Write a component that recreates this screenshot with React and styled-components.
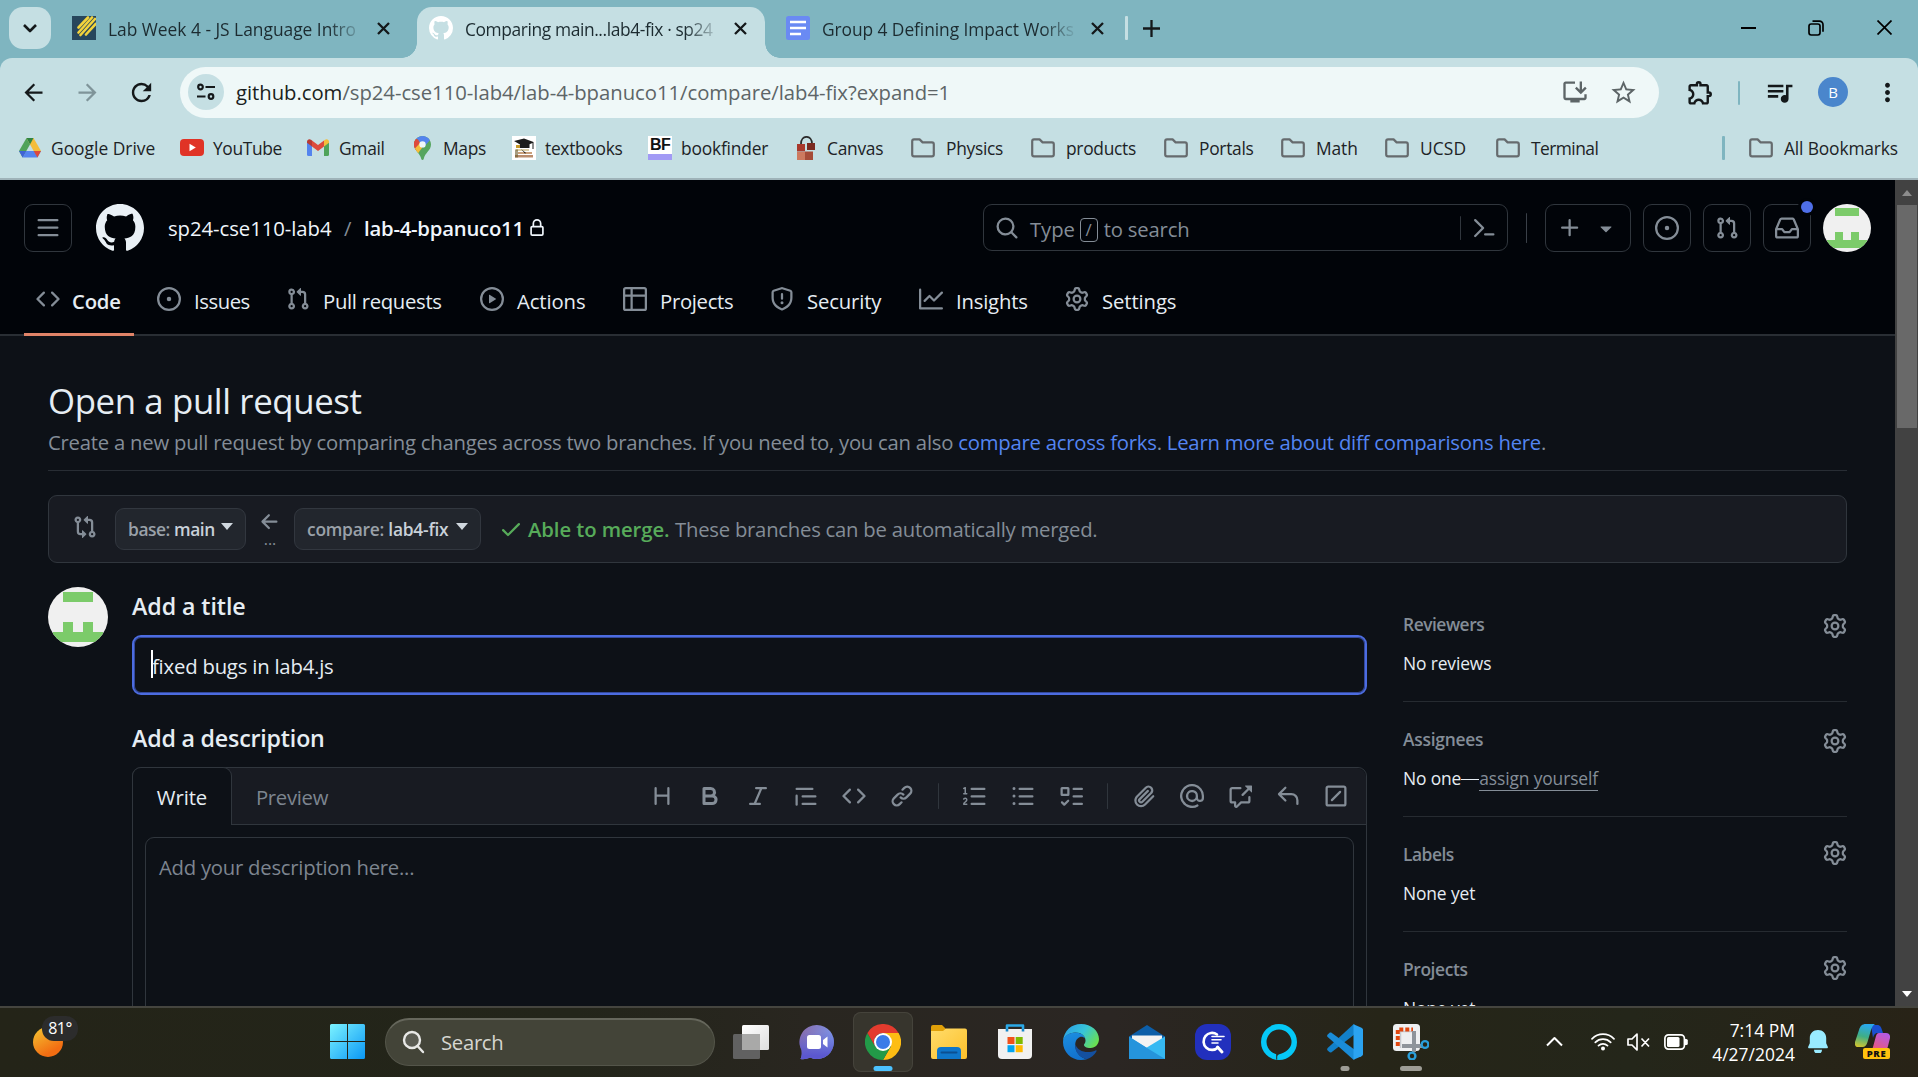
import React from "react";
import styled, { createGlobalStyle, css } from "styled-components";
import {
  MdArrowBack,
  MdArrowForward,
  MdRefresh,
  MdOutlineInstallDesktop,
  MdStarBorder,
  MdOutlineExtension,
  MdQueueMusic,
  MdMoreVert,
} from "react-icons/md";

const GlobalStyle = createGlobalStyle`
  * { box-sizing: border-box; }
  html, body { margin: 0; padding: 0; background: #0d1117; }
  body {
    font-family: "Open Sans", "Noto Sans", "Liberation Sans", sans-serif;
    overflow: hidden;
  }
  svg { display: block; flex: none; }
`;

/* ---------- Octicons (16px grid) ---------- */

const octicons = {
  code: "m11.28 3.22 4.25 4.25a.75.75 0 0 1 0 1.06l-4.25 4.25a.749.749 0 0 1-1.275-.326.749.749 0 0 1 .215-.734L13.94 8l-3.72-3.72a.749.749 0 0 1 .326-1.275.749.749 0 0 1 .734.215Zm-6.56 0a.751.751 0 0 1 1.042.018.751.751 0 0 1 .018 1.042L2.06 8l3.72 3.72a.749.749 0 0 1-.326 1.275.749.749 0 0 1-.734-.215L.47 8.53a.75.75 0 0 1 0-1.06Z",
  issue: "M8 9.5a1.5 1.5 0 1 0 0-3 1.5 1.5 0 0 0 0 3ZM8 0a8 8 0 1 1 0 16A8 8 0 0 1 8 0ZM1.5 8a6.5 6.5 0 1 0 13 0 6.5 6.5 0 0 0-13 0Z",
  pull: "M1.5 3.25a2.25 2.25 0 1 1 3 2.122v5.256a2.251 2.251 0 1 1-1.5 0V5.372A2.25 2.25 0 0 1 1.5 3.25Zm5.677-.177L9.573.677A.25.25 0 0 1 10 .854V2.5h1A2.5 2.5 0 0 1 13.5 5v5.628a2.251 2.251 0 1 1-1.5 0V5a1 1 0 0 0-1-1h-1v1.646a.25.25 0 0 1-.427.177L7.177 3.427a.25.25 0 0 1 0-.354ZM3.75 2.5a.75.75 0 1 0 0 1.5.75.75 0 0 0 0-1.5Zm0 9.5a.75.75 0 1 0 0 1.5.75.75 0 0 0 0-1.5Zm8.25.75a.75.75 0 1 0 1.5 0 .75.75 0 0 0-1.5 0Z",
  play: "M8 0a8 8 0 1 1 0 16A8 8 0 0 1 8 0ZM1.5 8a6.5 6.5 0 1 0 13 0 6.5 6.5 0 0 0-13 0Zm4.879-2.773 4.264 2.559a.25.25 0 0 1 0 .428l-4.264 2.559A.25.25 0 0 1 6 10.559V5.442a.25.25 0 0 1 .379-.215Z",
  table: "M0 1.75C0 .784.784 0 1.75 0h12.5C15.216 0 16 .784 16 1.75v12.5A1.75 1.75 0 0 1 14.25 16H1.75A1.75 1.75 0 0 1 0 14.25ZM6.5 6.5v8h7.75a.25.25 0 0 0 .25-.25V6.5Zm8-1.5V1.75a.25.25 0 0 0-.25-.25H6.5V5Zm-13 1.5v7.75c0 .138.112.25.25.25H5v-8ZM5 5V1.5H1.75a.25.25 0 0 0-.25.25V5Z",
  shield: "M7.467.133a1.748 1.748 0 0 1 1.066 0l5.25 1.68A1.75 1.75 0 0 1 15 3.48V7c0 1.566-.32 3.182-1.303 4.682-.983 1.498-2.585 2.813-5.032 3.855a1.697 1.697 0 0 1-1.33 0c-2.447-1.042-4.049-2.357-5.032-3.855C1.32 10.182 1 8.566 1 7V3.48a1.75 1.75 0 0 1 1.217-1.667Zm.61 1.429a.25.25 0 0 0-.153 0l-5.25 1.68a.25.25 0 0 0-.174.238V7c0 1.358.275 2.666 1.057 3.86.784 1.194 2.121 2.34 4.366 3.297a.196.196 0 0 0 .154 0c2.245-.956 3.582-2.104 4.366-3.298C13.225 9.666 13.5 8.36 13.5 7V3.48a.251.251 0 0 0-.174-.237l-5.25-1.68ZM8.75 4.75v3a.75.75 0 0 1-1.5 0v-3a.75.75 0 0 1 1.5 0ZM9 10.5a1 1 0 1 1-2 0 1 1 0 0 1 2 0Z",
  graph: "M1.5 1.75V13.5h13.75a.75.75 0 0 1 0 1.5H.75a.75.75 0 0 1-.75-.75V1.75a.75.75 0 0 1 1.5 0Zm14.28 2.53-5.25 5.25a.75.75 0 0 1-1.06 0L7 7.06 4.28 9.78a.751.751 0 0 1-1.042-.018.751.751 0 0 1-.018-1.042l3.25-3.25a.75.75 0 0 1 1.06 0L10 7.94l4.72-4.72a.751.751 0 0 1 1.042.018.751.751 0 0 1 .018 1.042Z",
  gear: "M8 0a8.2 8.2 0 0 1 .701.031C9.444.095 9.99.645 10.16 1.29l.288 1.107c.018.066.079.158.212.224.231.114.454.243.668.386.123.082.233.09.299.071l1.103-.303c.644-.176 1.392.021 1.82.63.27.385.506.792.704 1.218.315.675.111 1.422-.364 1.891l-.814.806c-.049.048-.098.147-.088.294.016.257.016.515 0 .772-.01.147.038.246.088.294l.814.806c.475.469.679 1.216.364 1.891a7.977 7.977 0 0 1-.704 1.217c-.428.61-1.176.807-1.82.63l-1.102-.302c-.067-.019-.177-.011-.3.071a5.909 5.909 0 0 1-.668.386c-.133.066-.194.158-.211.224l-.29 1.106c-.168.646-.715 1.196-1.458 1.26a8.006 8.006 0 0 1-1.402 0c-.743-.064-1.289-.614-1.458-1.26l-.289-1.106c-.018-.066-.079-.158-.212-.224a5.738 5.738 0 0 1-.668-.386c-.123-.082-.233-.09-.299-.071l-1.103.303c-.644.176-1.392-.021-1.82-.63a8.12 8.12 0 0 1-.704-1.218c-.315-.675-.111-1.422.363-1.891l.815-.806c.05-.048.098-.147.088-.294a6.214 6.214 0 0 1 0-.772c.01-.147-.038-.246-.088-.294l-.815-.806C.635 6.045.431 5.298.746 4.623a7.92 7.92 0 0 1 .704-1.217c.428-.61 1.176-.807 1.82-.63l1.102.302c.067.019.177.011.3-.071.214-.143.437-.272.668-.386.133-.066.194-.158.211-.224l.29-1.106C6.009.645 6.556.095 7.299.03 7.53.01 7.764 0 8 0Zm-.571 1.525c-.036.003-.108.036-.137.146l-.289 1.105c-.147.561-.549.967-.998 1.189-.173.086-.34.183-.5.29-.417.278-.97.423-1.529.27l-1.103-.303c-.109-.03-.175.016-.195.045-.22.312-.412.644-.573.99-.014.031-.021.11.059.19l.815.806c.411.406.562.957.53 1.456a4.709 4.709 0 0 0 0 .582c.032.499-.119 1.05-.53 1.456l-.815.806c-.081.08-.073.159-.059.19.162.346.353.677.573.989.02.03.085.076.195.046l1.102-.303c.56-.153 1.113-.008 1.53.27.161.107.328.204.501.29.447.222.85.629.997 1.189l.289 1.105c.029.109.101.143.137.146a6.6 6.6 0 0 0 1.142 0c.036-.003.108-.036.137-.146l.289-1.105c.147-.561.549-.967.998-1.189.173-.086.34-.183.5-.29.417-.278.97-.423 1.529-.27l1.103.303c.109.029.175-.016.195-.045.22-.313.411-.644.573-.99.014-.031.021-.11-.059-.19l-.815-.806c-.411-.406-.562-.957-.53-1.456a4.709 4.709 0 0 0 0-.582c-.032-.499.119-1.05.53-1.456l.815-.806c.081-.08.073-.159.059-.19a6.464 6.464 0 0 0-.573-.989c-.02-.03-.085-.076-.195-.046l-1.102.303c-.56.153-1.113.008-1.53-.27a4.44 4.44 0 0 0-.501-.29c-.447-.222-.85-.629-.997-1.189l-.289-1.105c-.029-.11-.101-.143-.137-.146a6.6 6.6 0 0 0-1.142 0ZM11 8a3 3 0 1 1-6 0 3 3 0 0 1 6 0ZM9.5 8a1.5 1.5 0 1 0-3.001.001A1.5 1.5 0 0 0 9.5 8Z",
  bars: "M1 2.75A.75.75 0 0 1 1.75 2h12.5a.75.75 0 0 1 0 1.5H1.75A.75.75 0 0 1 1 2.75Zm0 5A.75.75 0 0 1 1.75 7h12.5a.75.75 0 0 1 0 1.5H1.75A.75.75 0 0 1 1 7.75ZM1.75 12h12.5a.75.75 0 0 1 0 1.5H1.75a.75.75 0 0 1 0-1.5Z",
  github: "M8 0c4.42 0 8 3.58 8 8a8.013 8.013 0 0 1-5.45 7.59c-.4.08-.55-.17-.55-.38 0-.27.01-1.13.01-2.2 0-.75-.25-1.23-.54-1.48 1.78-.2 3.65-.88 3.65-3.95 0-.88-.31-1.59-.82-2.15.08-.2.36-1.02-.08-2.12 0 0-.67-.22-2.2.82-.64-.18-1.32-.27-2-.27-.68 0-1.36.09-2 .27-1.53-1.03-2.2-.82-2.2-.82-.44 1.1-.16 1.92-.08 2.12-.51.56-.82 1.28-.82 2.15 0 3.06 1.86 3.75 3.64 3.95-.23.2-.44.55-.51 1.07-.46.21-1.61.55-2.33-.66-.15-.24-.6-.83-1.23-.82-.67.01-.27.38.01.53.34.19.73.9.82 1.13.16.45.68 1.31 2.69.94 0 .67.01 1.3.01 1.49 0 .21-.15.45-.55.38A7.995 7.995 0 0 1 0 8c0-4.42 3.58-8 8-8Z",
  lock: "M4 4a4 4 0 0 1 8 0v2h.25c.966 0 1.75.784 1.75 1.75v5.5A1.75 1.75 0 0 1 12.25 15h-8.5A1.75 1.75 0 0 1 2 13.25v-5.5C2 6.784 2.784 6 3.75 6H4Zm8.25 3.5h-8.5a.25.25 0 0 0-.25.25v5.5c0 .138.112.25.25.25h8.5a.25.25 0 0 0 .25-.25v-5.5a.25.25 0 0 0-.25-.25ZM10.5 6V4a2.5 2.5 0 1 0-5 0v2Z",
  search: "M10.68 11.74a6 6 0 0 1-7.922-8.982 6 6 0 0 1 8.982 7.922l3.04 3.04a.749.749 0 0 1-.326 1.275.749.749 0 0 1-.734-.215ZM11.5 7a4.499 4.499 0 1 0-8.997 0A4.499 4.499 0 0 0 11.5 7Z",
  palette: "m6.354 8.04-4.773 4.773a.75.75 0 1 0 1.061 1.06L7.945 8.57a.75.75 0 0 0 0-1.06L2.642 2.206a.75.75 0 0 0-1.06 1.061L6.353 8.04ZM8.75 11.5a.75.75 0 0 0 0 1.5h5.5a.75.75 0 0 0 0-1.5h-5.5Z",
  plus: "M7.75 2a.75.75 0 0 1 .75.75V7h4.25a.75.75 0 0 1 0 1.5H8.5v4.25a.75.75 0 0 1-1.5 0V8.5H2.75a.75.75 0 0 1 0-1.5H7V2.75A.75.75 0 0 1 7.75 2Z",
  triangle: "m4.427 7.427 3.396 3.396a.25.25 0 0 0 .354 0l3.396-3.396A.25.25 0 0 0 11.396 7H4.604a.25.25 0 0 0-.177.427Z",
  inbox: "M2.8 2.06A1.75 1.75 0 0 1 4.41 1h7.18c.7 0 1.333.417 1.61 1.06l2.74 6.395c.04.093.06.194.06.295v4.5A1.75 1.75 0 0 1 14.25 15H1.75A1.75 1.75 0 0 1 0 13.25v-4.5c0-.101.02-.202.06-.295Zm1.61.44a.25.25 0 0 0-.23.152L1.887 8H4.75a.75.75 0 0 1 .6.3L6.625 10h2.75l1.275-1.7a.75.75 0 0 1 .6-.3h2.863L11.82 2.652a.25.25 0 0 0-.23-.152Zm10.09 7h-2.875l-1.275 1.7a.75.75 0 0 1-.6.3h-3.5a.75.75 0 0 1-.6-.3L4.375 9.5H1.5v3.75c0 .138.112.25.25.25h12.5a.25.25 0 0 0 .25-.25Z",
  compare: "M9.573.677A.25.25 0 0 1 10 .854V2.5h1A2.5 2.5 0 0 1 13.5 5v5.628a2.251 2.251 0 1 1-1.5 0V5a1 1 0 0 0-1-1h-1v1.646a.25.25 0 0 1-.427.177L7.177 3.427a.25.25 0 0 1 0-.354ZM6 12v-1.646a.25.25 0 0 1 .427-.177l2.396 2.396a.25.25 0 0 1 0 .354l-2.396 2.396A.25.25 0 0 1 6 15.146V13.5H5A2.5 2.5 0 0 1 2.5 11V5.372a2.25 2.25 0 1 1 1.5 0V11a1 1 0 0 0 1 1ZM4 3.25a.75.75 0 1 0-1.5 0 .75.75 0 0 0 1.5 0ZM12.75 12a.75.75 0 1 0 0 1.5.75.75 0 0 0 0-1.5Z",
  arrowLeft: "M7.78 12.53a.75.75 0 0 1-1.06 0L2.47 8.28a.75.75 0 0 1 0-1.06l4.25-4.25a.751.751 0 0 1 1.042.018.751.751 0 0 1 .018 1.042L4.81 7h7.44a.75.75 0 0 1 0 1.5H4.81l2.97 2.97a.75.75 0 0 1 0 1.06Z",
  check: "M13.78 4.22a.75.75 0 0 1 0 1.06l-7.25 7.25a.75.75 0 0 1-1.06 0L2.22 9.28a.751.751 0 0 1 .018-1.042.751.751 0 0 1 1.042-.018L6 10.94l6.72-6.72a.75.75 0 0 1 1.06 0Z",
  heading: "M3.75 2a.75.75 0 0 1 .75.75V7h7V2.75a.75.75 0 0 1 1.5 0v10.5a.75.75 0 0 1-1.5 0V8.5h-7v4.75a.75.75 0 0 1-1.5 0V2.75A.75.75 0 0 1 3.75 2Z",
  bold: "M4 2h4.5a3.501 3.501 0 0 1 2.852 5.53A3.499 3.499 0 0 1 9.5 14H4a1 1 0 0 1-1-1V3a1 1 0 0 1 1-1Zm1 7v3h4.5a1.5 1.5 0 0 0 0-3Zm3.5-2a1.5 1.5 0 0 0 0-3H5v3Z",
  italic: "M6 2.75A.75.75 0 0 1 6.75 2h6.5a.75.75 0 0 1 0 1.5h-2.505l-3.858 9H9.25a.75.75 0 0 1 0 1.5h-6.5a.75.75 0 0 1 0-1.5h2.505l3.858-9H6.75A.75.75 0 0 1 6 2.75Z",
  quote: "M1.75 2.5h10.5a.75.75 0 0 1 0 1.5H1.75a.75.75 0 0 1 0-1.5Zm4 5h8.5a.75.75 0 0 1 0 1.5h-8.5a.75.75 0 0 1 0-1.5Zm0 5h8.5a.75.75 0 0 1 0 1.5h-8.5a.75.75 0 0 1 0-1.5ZM2.5 7.75v6a.75.75 0 0 1-1.5 0v-6a.75.75 0 0 1 1.5 0Z",
  link: "m7.775 3.275 1.25-1.25a3.5 3.5 0 1 1 4.95 4.95l-2.5 2.5a3.5 3.5 0 0 1-4.95 0 .751.751 0 0 1 .018-1.042.751.751 0 0 1 1.042-.018 1.998 1.998 0 0 0 2.83 0l2.5-2.5a2.002 2.002 0 0 0-2.83-2.83l-1.25 1.25a.751.751 0 0 1-1.042-.018.751.751 0 0 1-.018-1.042Zm-4.69 9.64a1.998 1.998 0 0 0 2.83 0l1.25-1.25a.751.751 0 0 1 1.042.018.751.751 0 0 1 .018 1.042l-1.25 1.25a3.5 3.5 0 1 1-4.95-4.95l2.5-2.5a3.5 3.5 0 0 1 4.95 0 .751.751 0 0 1-.018 1.042.751.751 0 0 1-1.042.018 1.998 1.998 0 0 0-2.83 0l-2.5 2.5a1.998 1.998 0 0 0 0 2.83Z",
  ordered: "M5 3.25a.75.75 0 0 1 .75-.75h8.5a.75.75 0 0 1 0 1.5h-8.5A.75.75 0 0 1 5 3.25Zm0 5a.75.75 0 0 1 .75-.75h8.5a.75.75 0 0 1 0 1.5h-8.5A.75.75 0 0 1 5 8.25Zm0 5a.75.75 0 0 1 .75-.75h8.5a.75.75 0 0 1 0 1.5h-8.5a.75.75 0 0 1-.75-.75ZM.924 10.32a.5.5 0 0 1-.851-.525l.001-.001.001-.002.002-.004.007-.011c.097-.144.215-.273.348-.384.228-.19.588-.392 1.068-.392.468 0 .858.181 1.126.484.259.294.377.673.377 1.038 0 .987-.686 1.495-1.156 1.845l-.047.035c-.303.225-.522.4-.654.597h1.357a.5.5 0 0 1 0 1H.5a.5.5 0 0 1-.5-.5c0-1.005.692-1.52 1.167-1.875l.035-.025c.531-.396.8-.625.8-1.078a.57.57 0 0 0-.128-.376C1.806 10.068 1.695 10 1.5 10a.658.658 0 0 0-.429.163.835.835 0 0 0-.144.153ZM2.003 2.5V6h.503a.5.5 0 0 1 0 1H.5a.5.5 0 0 1 0-1h.503V3.308l-.28.14a.5.5 0 0 1-.446-.895l1.003-.5a.5.5 0 0 1 .723.447Z",
  unordered: "M5.75 2.5h8.5a.75.75 0 0 1 0 1.5h-8.5a.75.75 0 0 1 0-1.5Zm0 5h8.5a.75.75 0 0 1 0 1.5h-8.5a.75.75 0 0 1 0-1.5Zm0 5h8.5a.75.75 0 0 1 0 1.5h-8.5a.75.75 0 0 1 0-1.5ZM2 14a1 1 0 1 1 0-2 1 1 0 0 1 0 2Zm1-6a1 1 0 1 1-2 0 1 1 0 0 1 2 0ZM2 4a1 1 0 1 1 0-2 1 1 0 0 1 0 2Z",
  tasks: "M2 2h4a1 1 0 0 1 1 1v4a1 1 0 0 1-1 1H2a1 1 0 0 1-1-1V3a1 1 0 0 1 1-1Zm4.655 8.595a.75.75 0 0 1 0 1.06L4.03 14.28a.75.75 0 0 1-1.06 0l-1.5-1.5a.749.749 0 0 1 .326-1.275.749.749 0 0 1 .734.215l.97.97 2.095-2.095a.75.75 0 0 1 1.06 0ZM9.75 2.5h5.5a.75.75 0 0 1 0 1.5h-5.5a.75.75 0 0 1 0-1.5Zm0 5h5.5a.75.75 0 0 1 0 1.5h-5.5a.75.75 0 0 1 0-1.5Zm0 5h5.5a.75.75 0 0 1 0 1.5h-5.5a.75.75 0 0 1 0-1.5Zm-7.25-9v3h3v-3Z",
  clip: "M12.212 3.02a1.753 1.753 0 0 0-2.478.003l-5.83 5.83a3.007 3.007 0 0 0-.88 2.127c0 .795.315 1.551.88 2.116.567.567 1.333.89 2.126.89.79 0 1.548-.321 2.116-.89l5.48-5.48a.75.75 0 0 1 1.061 1.06l-5.48 5.48a4.492 4.492 0 0 1-3.177 1.33c-1.2 0-2.345-.487-3.187-1.33a4.483 4.483 0 0 1-1.32-3.177c0-1.195.475-2.341 1.32-3.186l5.83-5.83a3.25 3.25 0 0 1 5.553 2.297c0 .863-.343 1.691-.953 2.301L7.439 12.39c-.375.377-.884.59-1.416.593a1.998 1.998 0 0 1-1.412-.593 1.992 1.992 0 0 1 0-2.828l5.48-5.48a.751.751 0 0 1 1.042.018.751.751 0 0 1 .018 1.042l-5.48 5.48a.492.492 0 0 0 0 .707.499.499 0 0 0 .352.154.51.51 0 0 0 .356-.154l5.833-5.827a1.755 1.755 0 0 0 0-2.481Z",
  mention: "M4.75 2.37a6.501 6.501 0 0 0 6.5 11.26.75.75 0 0 1 .75 1.298A7.999 7.999 0 0 1 .989 4.148 8 8 0 0 1 16 7.75v1.5a2.75 2.75 0 0 1-5.072 1.475 3.999 3.999 0 0 1-6.65-4.19A4 4 0 0 1 12 8v1.25a1.25 1.25 0 0 0 2.5 0V7.867a6.5 6.5 0 0 0-9.75-5.496ZM10.5 8a2.5 2.5 0 1 0-5 0 2.5 2.5 0 0 0 5 0Z",
  crossRef: "M2.75 3.5a.25.25 0 0 0-.25.25v7.5c0 .138.112.25.25.25h2a.75.75 0 0 1 .75.75v2.19l2.72-2.72a.749.749 0 0 1 .53-.22h4.5a.25.25 0 0 0 .25-.25v-2.5a.75.75 0 0 1 1.5 0v2.5A1.75 1.75 0 0 1 13.25 13H9.06l-2.573 2.573A1.458 1.458 0 0 1 4 14.543V13H2.75A1.75 1.75 0 0 1 1 11.25v-7.5C1 2.784 1.784 2 2.75 2h5.5a.75.75 0 0 1 0 1.5ZM16 1.25v4.146a.25.25 0 0 1-.427.177L14.03 4.03l-3.75 3.75a.749.749 0 0 1-1.275-.326.749.749 0 0 1 .215-.734l3.75-3.75-1.543-1.543A.25.25 0 0 1 11.604 1h4.146a.25.25 0 0 1 .25.25Z",
  reply: "M6.78 1.97a.75.75 0 0 1 0 1.06L3.81 6h6.44A4.75 4.75 0 0 1 15 10.75v2.5a.75.75 0 0 1-1.5 0v-2.5a3.25 3.25 0 0 0-3.25-3.25H3.81l2.97 2.97a.749.749 0 0 1-.326 1.275.749.749 0 0 1-.734-.215L1.47 7.28a.75.75 0 0 1 0-1.06l4.25-4.25a.75.75 0 0 1 1.06 0Z",
  slash: "M13.25 1c.966 0 1.75.784 1.75 1.75v10.5A1.75 1.75 0 0 1 13.25 15H2.75A1.75 1.75 0 0 1 1 13.25V2.75C1 1.784 1.784 1 2.75 1ZM2.75 2.5a.25.25 0 0 0-.25.25v10.5c0 .138.112.25.25.25h10.5a.25.25 0 0 0 .25-.25V2.75a.25.25 0 0 0-.25-.25Zm8.53 3.28-5.5 5.5a.75.75 0 0 1-1.06-1.06l5.5-5.5a.75.75 0 0 1 1.06 1.06Z",
};

const Octicon = ({ name, size = 24, color = "currentColor" }) => (
  <svg width={size} height={size} viewBox="0 0 16 16" fill={color} fillRule="evenodd">
    <path d={octicons[name]} />
  </svg>
);

/* ---------- Text ---------- */

const Text = styled.span`
  display: block;
  white-space: nowrap;
  font-size: ${(p) => p.$size || 20.3}px;
  font-weight: ${(p) => p.$weight || 400};
  letter-spacing: ${(p) => p.$track || 0}px;
  color: ${(p) => p.$color || "inherit"};
  ${(p) => p.$width && css`width: ${p.$width}px;`}
`;

/* ---------- Desktop shell ---------- */

const Screen = styled.div`
  width: 1918px;
  height: 1077px;
  display: grid;
  grid-template-rows: 58px 122px 826px 71px;
  overflow: hidden;
  background: #7fb5c0;
`;

const TabStrip = styled.div`
  display: flex;
  padding: 7px 0 0 9px;
  background: #7fb5c0;
  color: #1c2b30;
`;

const TabSearch = styled.button`
  width: 42px;
  height: 42px;
  border: 0;
  padding: 0;
  border-radius: 14px;
  background: #c5dfe3;
  display: grid;
  place-items: center;
  color: #14181a;
`;

const Tabs = styled.div`
  display: flex;
  gap: 9px;
  margin-left: 9px;
`;

const flare = css`
  content: "";
  position: absolute;
  bottom: 0;
  width: 15px;
  height: 15px;
`;

const Tab = styled.div`
  position: relative;
  width: 348px;
  height: 51px;
  display: flex;
  padding: 9px 0 0 12px;
  ${(p) =>
    p.$active &&
    css`
      background: #c5dfe3;
      border-radius: 15px 15px 0 0;
      &::before {
        ${flare}
        left: -15px;
        background: radial-gradient(circle at 0 0, transparent 14.5px, #c5dfe3 15px);
      }
      &::after {
        ${flare}
        right: -15px;
        background: radial-gradient(circle at 100% 0, transparent 14.5px, #c5dfe3 15px);
      }
    `}
`;

const TabTitle = styled.div`
  width: 255px;
  height: 26px;
  line-height: 26px;
  margin: 0 14px 0 12px;
  white-space: nowrap;
  font-size: 17.4px;
  letter-spacing: ${(p) => p.$track}px;
  mask-image: linear-gradient(90deg, #000 220px, transparent 256px);
`;

const TabClose = styled.div`
  height: 24px;
  display: grid;
  place-items: center;
  color: #14181a;
`;

const NewTab = styled.div`
  display: flex;
  align-items: center;
  height: 42px;
  margin-left: 3px;
  gap: 15px;
  color: #14181a;
`;

const Divider = styled.span`
  flex: none;
  width: ${(p) => p.$w || 3}px;
  height: ${(p) => p.$h || 24}px;
  border-radius: 1px;
  background: ${(p) => p.$color};
  margin: ${(p) => p.$margin || 0};
`;

const WindowControls = styled.div`
  display: flex;
  margin: -7px 0 0 auto;
  height: 55px;
  color: #000;
`;

const WindowButton = styled.div`
  width: 68px;
  display: grid;
  place-items: center;
`;

const BrowserChrome = styled.div`
  display: grid;
  grid-template-rows: 69px 1fr;
  background: #c5dfe3;
  border-radius: 12px 12px 0 0;
  border-bottom: 2px solid #9fb3b9;
`;

const Toolbar = styled.div`
  display: flex;
  align-items: center;
  padding-left: 6px;
  color: #1d2326;
`;

const ToolButton = styled.div`
  width: 54px;
  height: 54px;
  flex: none;
  display: grid;
  place-items: center;
  padding-bottom: 1px;
  color: ${(p) => (p.$dim ? "#7f9499" : "#14181a")};
  margin-left: ${(p) => p.$ml || 0}px;
`;

const Omnibox = styled.div`
  width: 1479px;
  height: 51px;
  margin-left: 12px;
  border-radius: 26px;
  background: #eff8f8;
  display: flex;
  align-items: center;
  padding: 0 21px 1px 8px;
  color: #5d6567;
`;

const SiteInfo = styled.div`
  width: 36px;
  height: 36px;
  border-radius: 50%;
  background: #c5dfe3;
  display: grid;
  place-items: center;
  margin-right: 12px;
  color: #14181a;
`;

const Url = styled.div`
  flex: 1;
  font-size: 20.3px;
  letter-spacing: -0.03px;
  white-space: nowrap;
  b { font-weight: 400; color: #1a1f21; }
`;

const OmniActions = styled.div`
  display: flex;
  align-items: center;
  gap: 20px;
`;

const Profile = styled.div`
  width: 30px;
  height: 30px;
  border-radius: 50%;
  background: #4a86cc;
  color: #fff;
  font-size: 15px;
  display: grid;
  place-items: center;
`;

const BookmarksBar = styled.div`
  display: flex;
  align-items: center;
  padding: 0 0 10px 18px;
  color: #1d2326;
`;

const Bookmark = styled.div`
  flex: none;
  display: flex;
  align-items: center;
  gap: ${(p) => (p.$folder ? 11 : 9)}px;
  width: ${(p) => p.$w}px;
  font-size: 17.4px;
  letter-spacing: ${(p) => p.$track ?? -0.3}px;
  white-space: nowrap;
`;

const BookmarkIcon = styled.span`
  width: 24px;
  flex: none;
  display: grid;
  place-items: center;
`;

/* ---------- Page ---------- */

const Viewport = styled.div`
  display: grid;
  grid-template-columns: 1895px 23px;
  overflow: hidden;
`;

const Page = styled.div`
  background: #0d1117;
  color: #e6edf3;
  overflow: hidden;
`;

const Scrollbar = styled.div`
  background: #424242;
  display: flex;
  flex-direction: column;
  align-items: center;
  padding: 10px 0 9px;
`;

const ScrollThumb = styled.div`
  width: 20px;
  height: 223px;
  margin: 9px 0 auto;
  background: #696969;
`;

const ScrollArrow = styled.span`
  border: 5.5px solid transparent;
  ${(p) =>
    p.$up
      ? css`border-top: 0; border-bottom: 6px solid #8c8c8c;`
      : css`border-bottom: 0; border-top: 6px solid #fff;`}
`;

const Header = styled.header`
  height: 156px;
  background: #010409;
  border-bottom: 2px solid #292e34;
`;

const HeaderTop = styled.div`
  height: 84px;
  display: flex;
  align-items: center;
  padding: 12px 24px 0;
`;

const IconButton = styled.div`
  position: relative;
  width: ${(p) => p.$w || 48}px;
  height: 48px;
  flex: none;
  border: 1px solid #30363d;
  border-radius: 9px;
  display: flex;
  align-items: center;
  justify-content: center;
  gap: 12px;
  color: #848d97;
`;

const Logo = styled.div`
  margin: 0 24px;
  color: #e9f0f5;
`;

const Breadcrumb = styled.div`
  display: flex;
  align-items: center;
  color: #f0f6fc;
`;

const SearchBox = styled.div`
  width: 525px;
  height: 47px;
  margin: -1px 0 0 auto;
  border: 1px solid #30363d;
  border-radius: 9px;
  display: flex;
  align-items: center;
  padding: 0 11px;
  color: #848d97;
`;

const SearchHint = styled.div`
  display: flex;
  align-items: center;
  margin: 2px 0 0 11px;
`;

const Key = styled.span`
  width: 18px;
  height: 24px;
  margin: 2px 6px 0 5px;
  border: 1.5px solid #848d97;
  border-radius: 4px;
  display: grid;
  place-items: center;
  font-size: 17px;
  line-height: 1;
`;

const ActionRow = styled.div`
  display: flex;
  gap: 12px;
`;

const Unread = styled.span`
  position: absolute;
  top: -4px;
  right: -3px;
  width: 12px;
  height: 12px;
  border-radius: 50%;
  background: #4f6fe8;
  box-shadow: 0 0 0 3px #010409;
`;

const RepoNav = styled.nav`
  display: flex;
  padding-left: 24px;
  height: 72px;
`;

const NavItem = styled.div`
  height: 72px;
  width: ${(p) => p.$w}px;
  margin-right: 11px;
  padding: 5px 0 0 12px;
  display: flex;
  align-items: center;
  gap: ${(p) => (p.$active ? 12 : 13)}px;
  border-bottom: 3px solid ${(p) => (p.$active ? "#e08368" : "transparent")};
  svg { color: #848d97; margin-top: -4px; }
`;

const Main = styled.main`
  padding: 38px 48px 0;
`;

const PageHead = styled.div`
  height: 97px;
  border-bottom: 1px solid #282d34;
`;

const Title = styled.h1`
  margin: 0;
  height: 54px;
  line-height: 53px;
  font-size: 34.8px;
  font-weight: 400;
  letter-spacing: -0.38px;
`;

const Subtitle = styled.p`
  margin: 0;
  height: 28px;
  line-height: 28px;
  font-size: 20.3px;
  letter-spacing: -0.23px;
  color: #848d97;
  white-space: nowrap;
  a { color: #5485f2; }
`;

const RangeBar = styled.div`
  height: 68px;
  margin-top: 24px;
  border: 1px solid #30363d;
  border-radius: 9px;
  background: #181b22;
  display: flex;
  align-items: center;
  padding-left: 24px;
  color: #848d97;
`;

const CompareIcon = styled.div`
  margin: -5px 18px 0 0;
`;

const BranchButton = styled.div`
  height: 42px;
  width: ${(p) => p.$w}px;
  border: 1px solid #32373f;
  border-radius: 9px;
  background: #22262d;
  display: flex;
  align-items: center;
  padding: 0 12px 1px;
  gap: 6px;
  font-size: 17.4px;
  font-weight: 600;
  letter-spacing: ${(p) => p.$track}px;
  white-space: nowrap;
  color: #9aa1a9;
  b { font-weight: 600; color: #c9d1d9; }
`;

const Caret = styled.span`
  margin: -4px 0 0 auto;
  border: 6px solid transparent;
  border-top: 7px solid #d0d7de;
  border-bottom: 0;
`;

const Direction = styled.div`
  width: 48px;
  margin-top: -2px;
  display: flex;
  flex-direction: column;
  align-items: center;
  span { font-size: 16px; line-height: 16px; margin-top: -3px; }
`;

const MergeStatus = styled.div`
  display: flex;
  align-items: center;
  margin-left: 18px;
  color: #57ab5a;
  svg { margin-right: 5px; }
`;

const Compose = styled.div`
  display: grid;
  grid-template-columns: 60px 1235px 444px;
  column-gap: 24px;
  margin-top: 24px;
  > aside { margin-left: 12px; width: 444px; }
`;

const FieldLabel = styled.div`
  height: ${(p) => p.$h}px;
  line-height: ${(p) => p.$h}px;
  font-size: 23.2px;
  font-weight: 600;
  letter-spacing: ${(p) => p.$track}px;
`;

const TitleInput = styled.div`
  height: 60px;
  margin: 10px 0 27px;
  border: 2px solid #4c6ce0;
  box-shadow: inset 0 0 0 1px #34499a;
  border-radius: 9px;
  display: flex;
  align-items: center;
  padding: 1px 0 0 17px;
`;

const Cursor = styled.span`
  width: 2px;
  height: 28px;
  margin: -3px -1px 0 0;
  background: #fff;
`;

const Editor = styled.div`
  height: 420px;
  margin-top: 13px;
  border: 1px solid #30363d;
  border-radius: 9px;
`;

const EditorHead = styled.div`
  height: 57px;
  display: flex;
  background: #181b22;
  border-bottom: 1px solid #30363d;
  border-radius: 9px 9px 0 0;
`;

const EditorTab = styled.div`
  width: ${(p) => p.$w}px;
  height: 58px;
  margin: -1px 0 0 -1px;
  display: grid;
  place-items: center;
  padding-top: 1px;
  ${(p) =>
    p.$active
      ? css`
          background: #0d1117;
          border: 1px solid #30363d;
          border-bottom: 0;
          border-radius: 9px 9px 0 0;
        `
      : css`color: #7d8590;`}
`;

const MarkdownBar = styled.div`
  margin: 0 6px 1px auto;
  display: flex;
  align-items: center;
  color: #848d97;
`;

const MarkdownButton = styled.span`
  width: 48px;
  display: grid;
  place-items: center;
`;

const TextArea = styled.div`
  height: 340px;
  margin: 12px 12px 0;
  border: 1px solid #30363d;
  border-radius: 9px;
  padding: 15px 13px;
  color: #7d8590;
`;

const SideItem = styled.section`
  height: 115px;
  border-bottom: 1px solid #262b31;
  padding-top: 21px;
`;

const SideHead = styled.div`
  height: 32px;
  display: flex;
  align-items: center;
  justify-content: space-between;
  color: #848d97;
  svg { margin-top: ${(p) => p.$drop}px; }
`;

const SideBody = styled.div`
  height: 32px;
  margin-top: 7px;
  display: flex;
  align-items: center;
  font-size: 17.4px;
  letter-spacing: -0.12px;
  white-space: nowrap;
  a {
    color: #848d97;
    line-height: 23px;
    border-bottom: 1.5px solid #848d97;
    margin-top: 2px;
  }
`;

const Dash = styled.span`
  width: 18px;
  height: 1.5px;
  margin-top: 3px;
  background: #e6edf3;
`;

/* ---------- Taskbar ---------- */

const Taskbar = styled.footer`
  display: flex;
  align-items: center;
  padding-bottom: 2px;
  border-top: 2px solid #45453f;
  background: linear-gradient(90deg, #242418 0%, #23251a 30%, #292620 42%, #2b2623 58%, #262518 72%, #24261a 85%, #282317 100%);
  color: #fff;
`;

const Weather = styled.div`
  width: 330px;
  height: 67px;
  padding-left: 33px;
`;

const WeatherIcon = styled.div`
  position: relative;
  width: 30px;
  height: 30px;
  margin-top: 19px;
  border-radius: 50%;
  background: linear-gradient(150deg, #f4b52c 15%, #f26d12 75%);
`;

const Temperature = styled.span`
  position: absolute;
  left: 9px;
  top: -11px;
  width: 36px;
  height: 25px;
  border-radius: 12px;
  background: #2c2c2c;
  font-size: 16px;
  line-height: 24px;
  letter-spacing: -0.6px;
  text-align: center;
`;

const TaskSearch = styled.div`
  width: 330px;
  height: 48px;
  margin-left: 20px;
  border-radius: 24px;
  background: #434438;
  border: 1px solid #54554a;
  border-top: 2px solid #66675c;
  display: flex;
  align-items: center;
  padding: 0 0 1px 16px;
  gap: 15px;
  color: #d6d6d0;
`;

const TaskIcons = styled.div`
  display: flex;
  margin-left: 3px;
`;

const TaskIcon = styled.div`
  position: relative;
  width: 60px;
  height: 60px;
  margin: 0 3px;
  border-radius: 8px;
  display: grid;
  place-items: center;
  ${(p) =>
    p.$active &&
    css`
      background: #37352d;
      box-shadow: inset 0 0 0 1px #45433b;
    `}
  &::after {
    content: "";
    position: absolute;
    bottom: 1px;
    left: 50%;
    transform: translateX(-50%);
    width: ${(p) => p.$mark || 0}px;
    height: 5px;
    border-radius: 3px;
    background: ${(p) => (p.$active ? "#4cc2ff" : "#9d9c95")};
  }
`;

const Tray = styled.div`
  display: flex;
  align-items: center;
  margin-left: auto;
  height: 67px;
  padding-right: 28px;
`;

const TraySlot = styled.div`
  width: ${(p) => p.$w}px;
  display: grid;
  place-items: center;
`;

const Clock = styled.div`
  width: 101px;
  text-align: right;
  font-size: 17.4px;
  line-height: 24px;
  letter-spacing: 0.05px;
`;

const CopilotWrap = styled.div`
  position: relative;
  width: 35px;
  height: 35px;
  margin-left: 14px;
`;

const PreBadge = styled.span`
  position: absolute;
  left: 8px;
  bottom: 0;
  width: 27px;
  height: 11px;
  border-radius: 2px;
  background: #ffc20e;
  color: #111;
  font-size: 9.5px;
  font-weight: 800;
  line-height: 11px;
  letter-spacing: 0.6px;
  text-align: center;
`;

/* ---------- Drawings ---------- */

const Stroke = ({ size = 12, width = 2, d, w, h }) => (
  <svg width={w || size} height={h || size} viewBox={`0 0 ${w || size} ${h || size}`} fill="none" stroke="currentColor" strokeWidth={width} strokeLinejoin="round">
    <path d={d} />
  </svg>
);

const Identicon = ({ size }) => (
  <svg width={size} height={size} viewBox="0 0 60 60">
    <defs>
      <clipPath id={`round${size}`}>
        <circle cx="30" cy="30" r="30" />
      </clipPath>
    </defs>
    <g clipPath={`url(#round${size})`}>
      <rect width="60" height="60" fill="#f0f0f0" />
      <path fill="#7ccb6a" d="M15 5h30v10H15zM15 35h10v10h10V35h10v10h10v10H5V45h10z" />
    </g>
  </svg>
);

const GradescopeIcon = () => (
  <svg width="24" height="24" viewBox="0 0 24 24">
    <rect width="24" height="24" fill="#27465c" />
    <g stroke="#f3d33c" strokeWidth="2.6" strokeLinecap="round">
      <path d="M6.500 11.500L16 1.500M6.500 16.500L20 1.500M8.500 19L23 3M14 18.500L23.500 8" />
    </g>
  </svg>
);

const DocsIcon = () => (
  <svg width="24" height="24" viewBox="0 0 24 24">
    <rect width="24" height="24" rx="2.5" fill="#6a8af3" />
    <path d="M4 6h16M4 12h16M4 18h11" stroke="#fff" strokeWidth="2.6" />
  </svg>
);

const FolderIcon = () => (
  <svg width="24" height="20" viewBox="0 0 24 20" fill="none" stroke="#666b6e" strokeWidth="2.2" strokeLinejoin="round">
    <path d="M1.200 3.200a1.800 1.800 0 0 1 1.800-1.800h5.600l3 3h9.400a1.800 1.800 0 0 1 1.800 1.800v10.400a1.800 1.800 0 0 1-1.800 1.800H3a1.800 1.800 0 0 1-1.800-1.800z" />
  </svg>
);

const DriveIcon = () => (
  <svg width="22" height="20" viewBox="0 0 22 20">
    <path d="M7.500 0L0 13l3.600 6.500L11 6.500z" fill="#4fa35a" />
    <path d="M7.500 0h7L22 13h-7.300z" fill="#f4bd3a" />
    <path d="M7.500 0h7L11 6.500z" fill="#2f8443" />
    <path d="M3.600 19.500L7.300 13H22l-3.600 6.500z" fill="#5484ee" />
    <path d="M14.700 13H22l-3.600 6.500z" fill="#dd4a3c" />
    <path d="M0 13h7.300l-3.700 6.500z" fill="#3f63d6" />
  </svg>
);

const YouTubeIcon = () => (
  <svg width="24" height="17" viewBox="0 0 24 17">
    <rect width="24" height="17" rx="4" fill="#e03326" />
    <path d="M9.500 4.700v7.600l6.300-3.800z" fill="#fff" />
  </svg>
);

const GmailIcon = () => (
  <svg width="22" height="17" viewBox="0 0 22 17">
    <path d="M0 2.500V15.500A1.500 1.500 0 0 0 1.500 17H5V7z" fill="#5484ee" />
    <path d="M22 2.500V15.500A1.500 1.500 0 0 1 20.500 17H17V7z" fill="#4fa35a" />
    <path d="M5 1.500L11 6l6-4.500V7.500L11 12 5 7.500z" fill="#dd4a3c" />
    <path d="M0 2.500C0 .5 2.300-.6 4 .700L5 1.500v6L0 3.800z" fill="#b93a32" />
    <path d="M22 2.500C22 .5 19.700-.6 18 .700L17 1.500v6l5-3.700z" fill="#f4bd3a" />
  </svg>
);

const MapsIcon = () => (
  <svg width="17" height="24" viewBox="0 0 17 24">
    <defs>
      <clipPath id="pin">
        <path d="M8.500 0C13.200 0 17 3.800 17 8.500c0 6-6 8-7.300 14.500-.3 1.300-2.100 1.300-2.400 0C6.300 17.500 0 14.500 0 8.500 0 3.800 3.800 0 8.500 0z" />
      </clipPath>
    </defs>
    <g clipPath="url(#pin)">
      <rect width="17" height="24" fill="#56a55f" />
      <path d="M0 0h17L8.500 9z" fill="#5484ee" />
      <path d="M17 0v3L9 12 5 8z" fill="#5484ee" />
      <path d="M-1 1.500L8.500 9 1 16-1 14z" fill="#dd4a3c" />
      <path d="M10.500 8.500L3.500 18-1 14 6 6z" fill="#f4bd3a" />
      <path d="M-1 2l5 1.500L6 7-1 14.500z" fill="#dd4a3c" />
    </g>
    <circle cx="8.500" cy="8.400" r="3.200" fill="#eef7f8" />
  </svg>
);

const TextbooksIcon = () => (
  <svg width="24" height="24" viewBox="0 0 24 24">
    <rect width="24" height="24" fill="#fff" />
    <path d="M2 5l10-2.500L21.500 6v7h-1V7l-3 1.200V12H8V8.500z" fill="#1c1c1c" />
    <path d="M4 9h4v3H4z" fill="#c79a2b" />
    <path d="M4 13h13v2H4z" fill="#dccfa8" />
    <path d="M6 16h14v2H6z" fill="#c9a07b" />
    <path d="M3 19h18v2.500H3z" fill="#b98c6d" />
    <path d="M3 13.500h3v8H3z" fill="#6d5a2c" opacity=".6" />
    <path d="M9 13l5 4-1 .5z" fill="#111" />
  </svg>
);

const BookfinderTile = styled.span`
  width: 24px;
  height: 24px;
  display: block;
  background: #fff;
  border-bottom: 6px solid #a29af5;
  color: #111;
  font: 700 16px/18px "Liberation Sans", sans-serif;
  letter-spacing: -0.6px;
  text-align: center;
`;

const CanvasBagIcon = () => (
  <svg width="18" height="24" viewBox="0 0 18 24">
    <path d="M4 8c0-9.500 11-9.500 11 0" fill="none" stroke="#2b2b2b" strokeWidth="1.800" />
    <path d="M0 8h8v7.500H0z" fill="#a8392c" />
    <path d="M10 7h8v7h-8z" fill="#7a2a20" />
    <path d="M0 16h8v8H0z" fill="#cd7a5f" />
    <path d="M8 15.500h8V24H8z" fill="#a64c38" />
  </svg>
);

const WindowsIcon = () => (
  <svg width="35" height="35" viewBox="0 0 35 35">
    <defs>
      <linearGradient id="win" x1="0" y1="0" x2="1" y2="1">
        <stop offset="0" stopColor="#7cf3ff" />
        <stop offset="1" stopColor="#0a97f5" />
      </linearGradient>
    </defs>
    <path fill="url(#win)" d="M1.500 0H17v17H0V1.500A1.500 1.500 0 0 1 1.500 0zM18 0h15.500A1.500 1.500 0 0 1 35 1.500V17H18zM0 18h17v17H1.500A1.500 1.500 0 0 1 0 33.500zM18 18h17v15.500a1.500 1.500 0 0 1-1.500 1.500H18z" />
  </svg>
);

const TaskViewIcon = () => (
  <svg width="36" height="36" viewBox="0 0 36 36">
    <defs>
      <linearGradient id="tv" x1="0" y1="0" x2="1" y2="1">
        <stop offset="0" stopColor="#fff" />
        <stop offset="1" stopColor="#dedede" />
      </linearGradient>
    </defs>
    <rect x="9" y="1" width="27" height="25" rx="1.500" fill="url(#tv)" />
    <rect x="0" y="10" width="27" height="25" rx="1.500" fill="#616161" />
    <path d="M9 10h18v16H9z" fill="#a9a9a8" />
  </svg>
);

const ChatIcon = () => (
  <svg width="36" height="36" viewBox="0 0 36 36">
    <defs>
      <linearGradient id="chat" x1="0" y1="0" x2="1" y2="0.300">
        <stop offset="0" stopColor="#8a6aa8" />
        <stop offset="1" stopColor="#7b93e8" />
      </linearGradient>
      <linearGradient id="chat2" x1="0" y1="0" x2="0" y2="1">
        <stop offset="0.200" stopColor="#5b5fd0" stopOpacity="0" />
        <stop offset="0.900" stopColor="#5b57cf" />
      </linearGradient>
    </defs>
    <path d="M18 1a17 17 0 1 1-7 32.500C8 35 5 35.500 1.500 35 2.800 32 3 29.500 2.500 26A17 17 0 0 1 18 1z" fill="url(#chat)" />
    <path d="M18 1a17 17 0 1 1-7 32.500C8 35 5 35.500 1.500 35 2.800 32 3 29.500 2.500 26A17 17 0 0 1 18 1z" fill="url(#chat2)" />
    <rect x="8" y="11" width="14" height="14" rx="2.500" fill="#fff" />
    <path d="M24 16l4.500-3.500v11L24 20z" fill="#fff" />
  </svg>
);

const ChromeIcon = () => (
  <svg width="36" height="36" viewBox="0 0 36 36">
    <path d="M18 9h15.600A18 18 0 0 1 18 36l7.800-13.500z" fill="#fdbd13" />
    <path d="M10.200 22.500L2.400 9A18 18 0 0 0 18 36l7.800-13.500z" fill="#229a48" />
    <path d="M2.400 9A18 18 0 0 1 33.600 9H18a9 9 0 0 0-7.800 13.500z" fill="#e33b2e" />
    <circle cx="18" cy="18" r="9" fill="#fff" />
    <circle cx="18" cy="18" r="7" fill="#3a7be8" />
  </svg>
);

const ExplorerIcon = () => (
  <svg width="36" height="34" viewBox="0 0 36 34">
    <defs>
      <linearGradient id="fold" x1="0" y1="0" x2="1" y2="1">
        <stop offset="0" stopColor="#ffdc6b" />
        <stop offset="1" stopColor="#fdc02a" />
      </linearGradient>
    </defs>
    <path d="M0 2a2 2 0 0 1 2-2h9l4 4v5H0z" fill="#e0a009" />
    <path d="M0 6h12l3-2.500h19a2 2 0 0 1 2 2V32a2 2 0 0 1-2 2H2a2 2 0 0 1-2-2z" fill="url(#fold)" />
    <path d="M6 34V26a4 4 0 0 1 4-4h16a4 4 0 0 1 4 4v8z" fill="#0f76c9" />
    <path d="M10.500 27.500h15" stroke="#0b4f91" strokeWidth="2" strokeLinecap="round" />
  </svg>
);

const StoreIcon = () => (
  <svg width="36" height="36" viewBox="0 0 36 36">
    <path d="M10 8V1.500h16V8" fill="none" stroke="#2ba9e8" strokeWidth="2.600" strokeLinejoin="round" />
    <path d="M1 5h34v26a4 4 0 0 1-4 4H5a4 4 0 0 1-4-4z" fill="#f1f1f1" />
    <path d="M10 5v2.500M26 5v2.500" stroke="#1787c9" strokeWidth="2.600" />
    <path d="M10.500 13h7v7h-7z" fill="#f1511b" />
    <path d="M18.700 13h7v7h-7z" fill="#7fba00" />
    <path d="M10.500 21.200h7v7h-7z" fill="#00a4ef" />
    <path d="M18.700 21.200h7v7h-7z" fill="#ffb900" />
  </svg>
);

const EdgeIcon = () => (
  <svg width="36" height="36" viewBox="0 0 36 36">
    <defs>
      <linearGradient id="edgeTop" x1="0" y1="0.200" x2="1" y2="0.700">
        <stop offset="0" stopColor="#2b9fe6" />
        <stop offset="0.500" stopColor="#37c4d8" />
        <stop offset="1" stopColor="#6be04d" />
      </linearGradient>
      <linearGradient id="edgeLow" x1="0" y1="0" x2="0.300" y2="1">
        <stop offset="0" stopColor="#1c8fe0" />
        <stop offset="1" stopColor="#1272cf" />
      </linearGradient>
    </defs>
    <path d="M0 17C1 6.500 8.500 0 18 0c10.500 0 18 7.300 18 15 0 5-3.500 9-8.500 9-4.500 0-6.500-1.500-6.500-3 0-1.200 1.500-1.500 1.500-4.500C22.500 12 18 8.500 12.500 8.500 6 8.500 1.500 12.500 0 17z" fill="url(#edgeTop)" />
    <path d="M0 18C0 12 6 8.500 12.500 8.500c4.500 0 8.500 2.300 9.700 6-1.500-1.500-3.500-2-5.200-1.500-4 1.500-5.500 6-4.500 11 1.200 6 6 10 11.500 11.300-2 .6-4 .7-6 .7C8 36 0 28 0 18z" fill="url(#edgeLow)" />
    <path d="M12.300 20c-1 8 4.500 13.500 11.500 15.300 4-1.300 7.700-4.300 9.700-8 .4-.8-.3-1.300-1-.9C25 29.800 14.500 28 12.300 20z" fill="#1450a0" />
  </svg>
);

const MailIcon = () => (
  <svg width="36" height="34" viewBox="0 0 36 34">
    <path d="M0 11.500L18 0l18 11.500V20H0z" fill="#0c5ea8" />
    <path d="M3 10.500h30V24H3z" fill="#f3f3f3" />
    <path d="M0 11.500L18 23 0 34z" fill="#2a9fe3" />
    <path d="M36 11.500V34H1l16-11z" fill="#36b9f2" />
    <path d="M0 34V12l36 22z" fill="#2594dc" />
  </svg>
);

const FinderIcon = () => (
  <svg width="36" height="36" viewBox="0 0 36 36" fill="none" stroke="#fff" strokeLinecap="round">
    <rect width="36" height="36" rx="12" fill="#2230bd" stroke="none" />
    <path d="M22 10.500a8.500 8.500 0 1 0 1 13" strokeWidth="2.600" />
    <path d="M22.500 23l4.500 5" strokeWidth="3" />
    <path d="M17 12.500h12M17 15.800h9M17 19h6" strokeWidth="1.600" />
  </svg>
);

const AlexaIcon = () => (
  <svg width="36" height="36" viewBox="0 0 36 36">
    <path fillRule="evenodd" fill="#05c8f7" d="M18 0a18 18 0 1 1 0 36A18 18 0 0 1 18 0zM18 5.500A12.500 12.500 0 0 0 5.500 18c0 6 4.300 10.500 9.700 12.200v5.300h1V33c0-1.500.8-2.300 2-2.700C25 28.500 30.500 24 30.500 18A12.500 12.500 0 0 0 18 5.500z" />
  </svg>
);

const VSCodeIcon = () => (
  <svg width="36" height="36" viewBox="0 0 36 36">
    <path d="M26.500.200L28 1v9L4.500 28.200c-.7.500-1.500.400-2.200-.1L.700 26.600c-.8-.8-.8-1.900 0-2.700z" fill="#1280c9" />
    <path d="M26.500 35.800L28 35V26L4.500 8.800c-.7-.5-1.500-.4-2.200.1L.700 10.400c-.8.8-.8 1.900 0 2.700z" fill="#1a8cd8" />
    <path d="M26.500.200L34.500 3.800c1 .5 1.500 1.200 1.500 2.200v24c0 1-.5 1.700-1.500 2.200l-8 3.600z" fill="#2ba3f1" />
  </svg>
);

const SnipIcon = () => (
  <svg width="36" height="36" viewBox="0 0 36 36">
    <rect x="0" y="0" width="27" height="27" rx="3.500" fill="#eef0f2" />
    <path d="M7.500 24V7.500H20" fill="none" stroke="#c8cbd0" strokeWidth="1.500" />
    <path d="M4.800 22V5.500H20" fill="none" stroke="#e0460f" strokeWidth="4" strokeDasharray="4 2" />
    <path d="M21 7v21M9 22h20" stroke="#8e949b" strokeWidth="4" />
    <circle cx="19" cy="32" r="3.400" fill="none" stroke="#2a9fdb" strokeWidth="2.400" />
    <circle cx="32" cy="20.500" r="3.400" fill="none" stroke="#2a9fdb" strokeWidth="2.400" />
  </svg>
);

const WifiIcon = () => (
  <svg width="24" height="18" viewBox="0 0 24 18" fill="none" stroke="#fff" strokeWidth="1.700" strokeLinecap="round">
    <path d="M1 5.800a15.500 15.500 0 0 1 22 0M4.300 9.300a11 11 0 0 1 15.400 0M7.500 12.600a6.500 6.500 0 0 1 9 0" />
    <circle cx="12" cy="15.600" r="2" fill="#fff" stroke="none" />
  </svg>
);

const MuteIcon = () => (
  <svg width="24" height="18" viewBox="0 0 24 18" fill="none" stroke="#fff" strokeWidth="1.700" strokeLinejoin="round">
    <path d="M1 6v6h4l5 5V1L5 6zM14.500 5.500l7.500 8M22 5.500l-7.500 8" />
  </svg>
);

const BatteryIcon = () => (
  <svg width="24" height="16" viewBox="0 0 24 16">
    <rect x="0.900" y="0.900" width="19.500" height="14.200" rx="3.500" fill="none" stroke="#fff" strokeWidth="1.700" />
    <rect x="3" y="3" width="12.500" height="10" rx="1.500" fill="#fff" />
    <path d="M21 5h1.300A1.500 1.500 0 0 1 23.800 6.500v3a1.500 1.500 0 0 1-1.500 1.500H21z" fill="#fff" />
  </svg>
);

const BellIcon = () => (
  <svg width="20" height="23" viewBox="0 0 20 23" fill="#99ebff">
    <path d="M10 0c4.800 0 8.200 3.500 8.200 8v5.200l1.600 3.600c.3.700-.2 1.400-.9 1.400H1.100c-.7 0-1.200-.7-.9-1.400l1.600-3.600V8C1.800 3.500 5.200 0 10 0zM6 19.700h8a4 4 0 0 1-8 0z" />
  </svg>
);

const CopilotIcon = () => (
  <svg width="35" height="30" viewBox="0 0 35 30">
    <defs>
      <linearGradient id="cpl" x1="0.300" y1="0" x2="0.100" y2="1">
        <stop offset="0" stopColor="#2aa9ea" />
        <stop offset="0.500" stopColor="#3fae85" />
        <stop offset="1" stopColor="#d9c52a" />
      </linearGradient>
      <linearGradient id="cpr" x1="0.800" y1="0" x2="0.300" y2="1">
        <stop offset="0" stopColor="#b25be8" />
        <stop offset="1" stopColor="#f4566a" />
      </linearGradient>
    </defs>
    <path d="M16 1h6c3 0 4 1.500 5 5l1 3h-5c-3 0-4 1.500-5 5z" fill="#1a4fd0" />
    <path d="M11 0h9c-2 1-3 3-4 6l-3.500 12c-1 3.500-2.500 5-5 5H3c-2.500 0-3.500-2-3-5L4 6c1.200-4 3-6 7-6z" fill="url(#cpl)" />
    <path d="M24 9h7c3 0 4.500 2 4 5l-2 8c-1 4-3 7-6 7H14c2-1 3-3 4-6l3-11c.6-2 1.500-3 3-3z" fill="url(#cpr)" />
  </svg>
);

/* ---------- Data ---------- */

const tabs = [
  { title: "Lab Week 4 - JS Language Intro", icon: <GradescopeIcon />, track: -0.02 },
  { title: "Comparing main...lab4-fix · sp24", icon: <Octicon name="github" color="#fff" />, active: true, track: -0.4 },
  { title: "Group 4 Defining Impact Works", icon: <DocsIcon />, track: -0.08 },
];

const bookmarks = [
  { label: "Google Drive", icon: <DriveIcon />, w: 162, track: 0 },
  { label: "YouTube", icon: <YouTubeIcon />, w: 126, track: -0.38 },
  { label: "Gmail", icon: <GmailIcon />, w: 104 },
  { label: "Maps", icon: <MapsIcon />, w: 102 },
  { label: "textbooks", icon: <TextbooksIcon />, w: 136 },
  { label: "bookfinder", icon: <BookfinderTile>BF</BookfinderTile>, w: 146, track: -0.2 },
  { label: "Canvas", icon: <CanvasBagIcon />, w: 117, track: -0.3 },
  { label: "Physics", w: 120 },
  { label: "products", w: 133 },
  { label: "Portals", w: 117 },
  { label: "Math", w: 104, track: -0.1 },
  { label: "UCSD", w: 111, track: 0.1 },
  { label: "Terminal", w: 120, track: -0.55 },
];

const navItems = [
  { label: "Code", icon: "code", w: 110, active: true, track: -0.2 },
  { label: "Issues", icon: "issue", w: 118, track: -0.45 },
  { label: "Pull requests", icon: "pull", w: 183, track: -0.3 },
  { label: "Actions", icon: "play", w: 132, track: -0.1 },
  { label: "Projects", icon: "table", w: 136, track: -0.3 },
  { label: "Security", icon: "shield", w: 138, track: -0.15 },
  { label: "Insights", icon: "graph", w: 135, track: -0.2 },
  { label: "Settings", icon: "gear", w: 140, track: -0.1 },
];

const markdownGroups = [
  ["heading", "bold", "italic", "quote", "code", "link"],
  ["ordered", "unordered", "tasks"],
  ["clip", "mention", "crossRef", "reply", "slash"],
];

const sideItems = [
  { label: "Reviewers", body: "No reviews", drop: 3, track: -0.48 },
  { label: "Assignees", body: "No one", assign: true, drop: 3, track: -0.25 },
  { label: "Labels", body: "None yet", drop: -2, track: -0.48 },
  { label: "Projects", body: "None yet", drop: -2, track: -0.4 },
];

const taskIcons = [
  { name: "task-view", icon: <TaskViewIcon /> },
  { name: "chat", icon: <ChatIcon /> },
  { name: "chrome", icon: <ChromeIcon />, active: true, mark: 19 },
  { name: "explorer", icon: <ExplorerIcon /> },
  { name: "store", icon: <StoreIcon /> },
  { name: "edge", icon: <EdgeIcon /> },
  { name: "mail", icon: <MailIcon /> },
  { name: "finder", icon: <FinderIcon /> },
  { name: "alexa", icon: <AlexaIcon /> },
  { name: "vscode", icon: <VSCodeIcon />, mark: 9 },
  { name: "snip", icon: <SnipIcon />, mark: 22 },
];

/* ---------- Sections ---------- */

const BrowserTabs = () => (
  <TabStrip>
    <TabSearch>
      <Stroke w={14} h={10} width={2.6} d="M1 2l6 6 6-6" />
    </TabSearch>
    <Tabs>
      {tabs.map((t) => (
        <Tab key={t.title} $active={t.active}>
          {t.icon}
          <TabTitle $track={t.track}>{t.title}</TabTitle>
          <TabClose>
            <Stroke size={13} width={2.3} d="M1 1l11 11M12 1L1 12" />
          </TabClose>
        </Tab>
      ))}
    </Tabs>
    <NewTab>
      <Divider $color="#c5dfe3" />
      <Stroke size={17} width={2.3} d="M8.500 0v17M0 8.500h17" />
    </NewTab>
    <WindowControls>
      <WindowButton>
        <Stroke w={15} h={2} width={2} d="M0 1h15" />
      </WindowButton>
      <WindowButton>
        <svg width="16" height="16" viewBox="0 0 16 16" fill="none" stroke="currentColor" strokeWidth="1.700">
          <rect x="1" y="4" width="11" height="11" rx="2.200" />
          <path d="M4.500 1.200h7a3.500 3.500 0 0 1 3.500 3.500v7" />
        </svg>
      </WindowButton>
      <WindowButton>
        <Stroke size={15} width={1.7} d="M.5.5l14 14M14.500.5l-14 14" />
      </WindowButton>
    </WindowControls>
  </TabStrip>
);

const BrowserBars = () => (
  <BrowserChrome>
    <Toolbar>
      <ToolButton><MdArrowBack size={27} /></ToolButton>
      <ToolButton $dim><MdArrowForward size={27} /></ToolButton>
      <ToolButton><MdRefresh size={29} /></ToolButton>
      <Omnibox>
        <SiteInfo>
          <svg width="18" height="18" viewBox="0 0 18 18" fill="none" stroke="currentColor" strokeWidth="2.200">
            <circle cx="3.500" cy="4" r="2.300" />
            <path d="M8.500 4H18M0 13.500h8.500" />
            <circle cx="14" cy="13.500" r="2.300" />
          </svg>
        </SiteInfo>
        <Url>
          <b>github.com</b>/sp24-cse110-lab4/lab-4-bpanuco11/compare/lab4-fix?expand=1
        </Url>
        <OmniActions>
          <MdOutlineInstallDesktop size={28} />
          <MdStarBorder size={29} />
        </OmniActions>
      </Omnibox>
      <ToolButton $ml={14}><MdOutlineExtension size={29} /></ToolButton>
      <Divider $color="#7fb5c0" $w={2} $margin="0 12px 0 11px" />
      <ToolButton><MdQueueMusic size={31} /></ToolButton>
      <ToolButton><Profile>B</Profile></ToolButton>
      <ToolButton><MdMoreVert size={29} /></ToolButton>
    </Toolbar>
    <BookmarksBar>
      {bookmarks.map((b) => (
        <Bookmark key={b.label} $w={b.w} $folder={!b.icon} $track={b.track}>
          <BookmarkIcon>{b.icon || <FolderIcon />}</BookmarkIcon>
          {b.label}
        </Bookmark>
      ))}
      <Divider $color="#7fb5c0" $margin="0 24px 0 106px" />
      <Bookmark $folder $track={-0.15}>
        <BookmarkIcon><FolderIcon /></BookmarkIcon>
        All Bookmarks
      </Bookmark>
    </BookmarksBar>
  </BrowserChrome>
);

const SiteHeader = () => (
  <Header>
    <HeaderTop>
      <IconButton><Octicon name="bars" /></IconButton>
      <Logo><Octicon name="github" size={48} /></Logo>
      <Breadcrumb>
        <Text $width={176} $track={-0.05}>sp24-cse110-lab4</Text>
        <Text $width={20} $color="#848d97">/</Text>
        <Text $width={164} $weight={600} $track={-0.22}>lab-4-bpanuco11</Text>
        <Octicon name="lock" size={18} />
      </Breadcrumb>
      <SearchBox>
        <Octicon name="search" />
        <SearchHint>
          <Text $track={-0.1}>Type</Text>
          <Key>/</Key>
          <Text $track={-0.2}>to search</Text>
        </SearchHint>
        <Divider $w={1} $color="#30363d" $margin="0 11px 0 auto" />
        <Octicon name="palette" />
      </SearchBox>
      <Divider $w={1} $h={30} $color="#3a4048" $margin="0 18px" />
      <ActionRow>
        <IconButton $w={86}>
          <Octicon name="plus" />
          <Octicon name="triangle" />
        </IconButton>
        <IconButton><Octicon name="issue" /></IconButton>
        <IconButton><Octicon name="pull" /></IconButton>
        <IconButton>
          <Octicon name="inbox" />
          <Unread />
        </IconButton>
        <Identicon size={48} />
      </ActionRow>
    </HeaderTop>
    <RepoNav>
      {navItems.map((n) => (
        <NavItem key={n.label} $w={n.w} $active={n.active}>
          <Octicon name={n.icon} />
          <Text $weight={n.active ? 600 : 400} $track={n.track}>{n.label}</Text>
        </NavItem>
      ))}
    </RepoNav>
  </Header>
);

const CompareRange = () => (
  <RangeBar>
    <CompareIcon><Octicon name="compare" /></CompareIcon>
    <BranchButton $w={131} $track={-0.45}><span>base: <b>main</b></span><Caret /></BranchButton>
    <Direction>
      <Octicon name="arrowLeft" />
      <span>...</span>
    </Direction>
    <BranchButton $w={187} $track={-0.25}><span>compare: <b>lab4-fix</b></span><Caret /></BranchButton>
    <MergeStatus>
      <Octicon name="check" />
      <Text $weight={600} $width={147} $track={-0.08}>Able to merge.</Text>
      <Text $color="#848d97" $track={-0.24}>These branches can be automatically merged.</Text>
    </MergeStatus>
  </RangeBar>
);

const ComposeForm = () => (
  <div>
    <FieldLabel $h={38} $track={-0.06}>Add a title</FieldLabel>
    <TitleInput>
      <Cursor />
      <Text $track={-0.2}>fixed bugs in lab4.js</Text>
    </TitleInput>
    <FieldLabel $h={32} $track={-0.18}>Add a description</FieldLabel>
    <Editor>
      <EditorHead>
        <EditorTab $w={100} $active><Text $track={-0.1}>Write</Text></EditorTab>
        <EditorTab $w={122}><Text $track={-0.3}>Preview</Text></EditorTab>
        <MarkdownBar>
          {markdownGroups.map((group, i) => (
            <React.Fragment key={group[0]}>
              {i > 0 && <Divider $w={1} $h={26} $color="#30363d" $margin="0 12px" />}
              {group.map((name) => (
                <MarkdownButton key={name}><Octicon name={name} /></MarkdownButton>
              ))}
            </React.Fragment>
          ))}
        </MarkdownBar>
      </EditorHead>
      <TextArea><Text $track={-0.24}>Add your description here...</Text></TextArea>
    </Editor>
  </div>
);

const Sidebar = () => (
  <aside>
    {sideItems.map((s) => (
      <SideItem key={s.label}>
        <SideHead $drop={s.drop}>
          <Text $size={17.4} $weight={600} $track={s.track}>{s.label}</Text>
          <Octicon name="gear" />
        </SideHead>
        <SideBody>
          {s.body}
          {s.assign && (
            <>
              <Dash />
              <a>assign yourself</a>
            </>
          )}
        </SideBody>
      </SideItem>
    ))}
  </aside>
);

const SystemBar = () => (
  <Taskbar>
    <Weather>
      <WeatherIcon><Temperature>81°</Temperature></WeatherIcon>
    </Weather>
    <WindowsIcon />
    <TaskSearch>
      <svg width="24" height="24" viewBox="0 0 24 24" fill="none" stroke="#e8e8e6" strokeWidth="2.400" strokeLinecap="round">
        <circle cx="10" cy="10" r="8" fill="#5b5c53" />
        <path d="M15.500 16L21 22" />
      </svg>
      <Text $track={-0.3}>Search</Text>
    </TaskSearch>
    <TaskIcons>
      {taskIcons.map((t) => (
        <TaskIcon key={t.name} $active={t.active} $mark={t.mark}>{t.icon}</TaskIcon>
      ))}
    </TaskIcons>
    <Tray>
      <TraySlot $w={61}>
        <Stroke w={17} h={11} width={2} d="M1 9.500l7.500-7.500 7.500 7.500" />
      </TraySlot>
      <TraySlot $w={36}><WifiIcon /></TraySlot>
      <TraySlot $w={36}><MuteIcon /></TraySlot>
      <TraySlot $w={37}><BatteryIcon /></TraySlot>
      <Clock>
        <div>7:14 PM</div>
        <div>4/27/2024</div>
      </Clock>
      <TraySlot $w={46}><BellIcon /></TraySlot>
      <CopilotWrap>
        <CopilotIcon />
        <PreBadge>PRE</PreBadge>
      </CopilotWrap>
    </Tray>
  </Taskbar>
);

export default function App() {
  return (
    <>
      <GlobalStyle />
      <Screen>
        <BrowserTabs />
        <BrowserBars />
        <Viewport>
          <Page>
            <SiteHeader />
            <Main>
              <PageHead>
                <Title>Open a pull request</Title>
                <Subtitle>
                  Create a new pull request by comparing changes across two branches. If you need to, you can also{" "}
                  <a>compare across forks</a>. <a>Learn more about diff comparisons here</a>.
                </Subtitle>
              </PageHead>
              <CompareRange />
              <Compose>
                <Identicon size={60} />
                <ComposeForm />
                <Sidebar />
              </Compose>
            </Main>
          </Page>
          <Scrollbar>
            <ScrollArrow $up />
            <ScrollThumb />
            <ScrollArrow />
          </Scrollbar>
        </Viewport>
        <SystemBar />
      </Screen>
    </>
  );
}
